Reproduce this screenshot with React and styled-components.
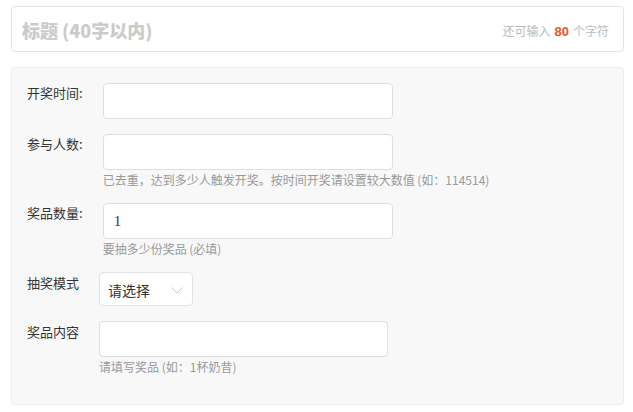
import React from "react";
import styled, { createGlobalStyle } from "styled-components";

const GlobalStyle = createGlobalStyle`
  html, body {
    margin: 0;
    padding: 0;
    background: #fff;
  }
  body {
    font-family: "Noto Sans CJK SC", "Noto Sans", sans-serif;
    color: #333;
  }
`;

const Page = styled.div`
  padding: 6px 9px 0 11px;
  display: flex;
  flex-direction: column;
  gap: 15px;
`;

const TitleBox = styled.div`
  height: 44px;
  border: 1px solid #e3e3e3;
  border-radius: 4px;
  background: #fff;
  display: flex;
  align-items: center;
  justify-content: space-between;
  padding: 0 14px 0 10px;
`;

const TitleText = styled.div`
  font-size: 18px;
  font-weight: 900;
  color: #cbcbcb;
  line-height: 24px;
  margin-top: 2px;
`;

const Counter = styled.div`
  font-size: 12px;
  color: #bbb;
  display: flex;
  align-items: baseline;
  gap: 4px;
  margin-top: 2px;
`;

const CounterNum = styled.span`
  font-family: "Liberation Sans", sans-serif;
  font-weight: bold;
  font-size: 13px;
  color: #f4511e;
`;

const Panel = styled.div`
  height: 338px;
  box-sizing: border-box;
  border: 1px solid #ececec;
  border-radius: 4px;
  background: #f8f8f8;
  padding: 15px 15px 0 15px;
  display: flex;
  flex-direction: column;
  gap: 15px;
`;

const Row = styled.div`
  display: flex;
  align-items: flex-start;
  gap: 20px;
`;

const Label = styled.div`
  font-size: 13px;
  line-height: 20px;
  color: #333;
  padding-top: ${(p) => p.$top || 0}px;
  white-space: nowrap;
`;

const Field = styled.div`
  display: flex;
  flex-direction: column;
`;

const Input = styled.div`
  width: ${(p) => p.$w || 290}px;
  height: 36px;
  box-sizing: border-box;
  border: 1px solid #dedede;
  border-radius: 4px;
  background: #fff;
  display: flex;
  align-items: center;
  padding-left: 10px;
  font-family: "Liberation Serif", serif;
  font-size: 15px;
  color: #333;
`;

const Help = styled.div`
  margin-top: 2px;
  font-size: 12px;
  line-height: 16px;
  color: #999;
  white-space: nowrap;
`;

const Select = styled.div`
  width: 94px;
  height: 34px;
  box-sizing: border-box;
  border: 1px solid #e2e2e2;
  border-radius: 4px;
  background: #fff;
  display: flex;
  align-items: center;
  justify-content: space-between;
  padding: 2px 9px 0 8px;
  font-size: 14px;
  color: #333;
`;

const Chevron = () => (
  <svg width="12" height="7" viewBox="0 0 12 7">
    <path d="M0.5 0.5 L6 6 L11.5 0.5" fill="none" stroke="#c8c8c8" strokeWidth="1" />
  </svg>
);

export default function App() {
  return (
    <>
      <GlobalStyle />
      <Page>
        <TitleBox>
          <TitleText>标题 (40字以内)</TitleText>
          <Counter>
            还可输入 <CounterNum>80</CounterNum> 个字符
          </Counter>
        </TitleBox>
        <Panel>
          <Row>
            <Label>开奖时间:</Label>
            <Field>
              <Input />
            </Field>
          </Row>
          <Row>
            <Label>参与人数:</Label>
            <Field>
              <Input />
              <Help>已去重，达到多少人触发开奖。按时间开奖请设置较大数值 (如：114514)</Help>
            </Field>
          </Row>
          <Row>
            <Label>奖品数量:</Label>
            <Field>
              <Input>1</Input>
              <Help>要抽多少份奖品 (必填)</Help>
            </Field>
          </Row>
          <Row>
            <Label $top={1}>抽奖模式</Label>
            <Field>
              <Select>
                请选择
                <Chevron />
              </Select>
            </Field>
          </Row>
          <Row>
            <Label $top={1}>奖品内容</Label>
            <Field>
              <Input $w={289} />
              <Help>请填写奖品 (如：1杯奶昔)</Help>
            </Field>
          </Row>
        </Panel>
      </Page>
    </>
  );
}
